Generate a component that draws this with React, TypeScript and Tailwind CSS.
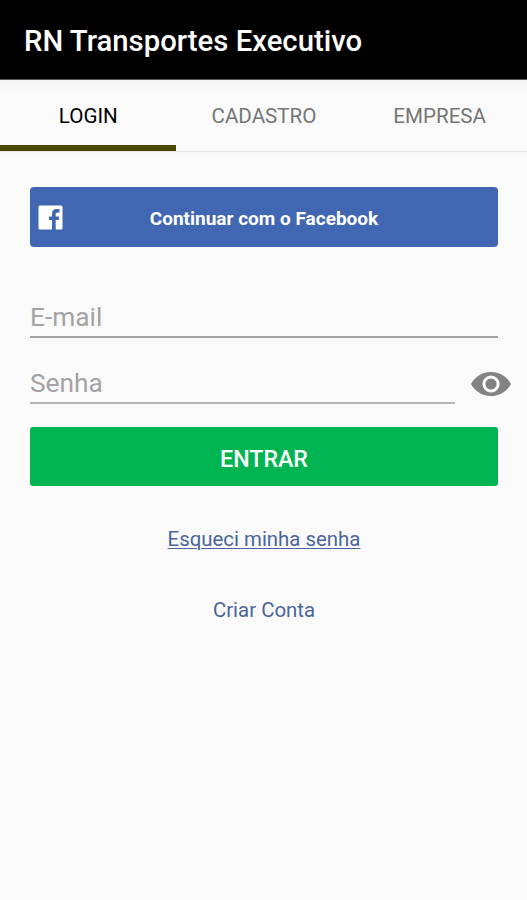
import { useState } from "react";

const tabs = ["LOGIN", "CADASTRO", "EMPRESA"];

export default function App() {
  const [active, setActive] = useState("LOGIN");
  const [visible, setVisible] = useState(false);

  return (
    <div className="flex h-[900px] w-[527px] flex-col bg-[#fafafa] font-[Roboto,sans-serif]">
      <header className="flex h-20 shrink-0 items-center border-b border-[#555] bg-black pl-6 pt-[4px]">
        <h1 className="text-[29.3px] font-medium text-white">
          RN Transportes Executivo
        </h1>
      </header>

      <nav className="grid h-[71px] shrink-0 grid-cols-3 bg-linear-to-b from-[#f3f3f3] to-[#fafafa] to-15% shadow-[0_1px_1px_rgba(0,0,0,0.07)]">
        {tabs.map((tab) => (
          <button
            key={tab}
            onClick={() => setActive(tab)}
            className={
              tab === active
                ? "border-b-[6px] border-[#4b4900] pl-px pt-[8px] text-[20.6px] text-black"
                : "border-b-[6px] border-transparent pl-px pt-[8px] text-[20.6px] text-[#757575]"
            }
          >
            {tab}
          </button>
        ))}
      </nav>

      <main className="flex flex-col pl-[30px] pr-[29px] pt-[36px]">
        <button className="flex h-[60px] items-center rounded-[4px] bg-[#4267b2] px-2 text-white">
          <svg viewBox="0 0 25 25" className="mt-px size-[25px]">
            <path
              fill="currentColor"
              d="M2 .5h21Q24.500.5 24.500 2v21q0 1.500-1.500 1.500h-5.300v-9.400h3l.5-3.600h-3.500V9.300c0-1.200.4-1.900 1.900-1.900h1.900V4.100q-.9-.1-2.800-.1c-2.900 0-4.700 1.800-4.700 4.900v2.600h-3v3.600h3v9.400H2Q.5 24.500.5 23V2Q.5.5 2 .5Z"
            />
          </svg>
          <span className="flex-1 pr-[25px] pt-[4px] text-center text-[19px] font-bold">
            Continuar com o Facebook
          </span>
        </button>

        <input
          type="email"
          placeholder="E-mail"
          className="mt-[46px] h-[45px] border-b-2 border-[#a2a2a2] pt-[5px] text-[26.3px] outline-none placeholder:text-[#a3a3a3]"
        />

        <div className="-mr-[13px] mt-[21px] flex">
          <input
            type={visible ? "text" : "password"}
            placeholder="Senha"
            className="h-[45px] w-[425px] border-b-2 border-[#b5b5b5] pt-[5px] text-[26.3px] outline-none placeholder:text-[#a3a3a3]"
          />
          <button
            aria-label="Mostrar senha"
            onClick={() => setVisible(!visible)}
            className="ml-auto pt-[5px] text-[#828282]"
          >
            <svg viewBox="0 0 40 24" className="h-[24px] w-[40px]">
              <path
                fill="currentColor"
                d="M20 0C11.5 0 4 4.6 0 12c4 7.4 11.5 12 20 12s16-4.6 20-12C36 4.6 28.500 0 20 0Z"
              />
              <circle
                cx="20"
                cy="12"
                r="7.1"
                fill="none"
                stroke="#fafafa"
                strokeWidth="3"
              />
            </svg>
          </button>
        </div>

        <button className="mt-[23px] h-[59px] rounded-[3px] bg-[#00b551] pt-[5px] text-[23.2px] font-medium text-white">
          ENTRAR
        </button>
        <a
          href="#"
          className="mt-[37px] self-center text-[20.4px] leading-[32px] text-[#4a659b] underline decoration-1 underline-offset-2"
        >
          Esqueci minha senha
        </a>
        <a
          href="#"
          className="mt-[39px] self-center text-[20.4px] leading-[32px] text-[#4a659b]"
        >
          Criar Conta
        </a>
      </main>
    </div>
  );
}
